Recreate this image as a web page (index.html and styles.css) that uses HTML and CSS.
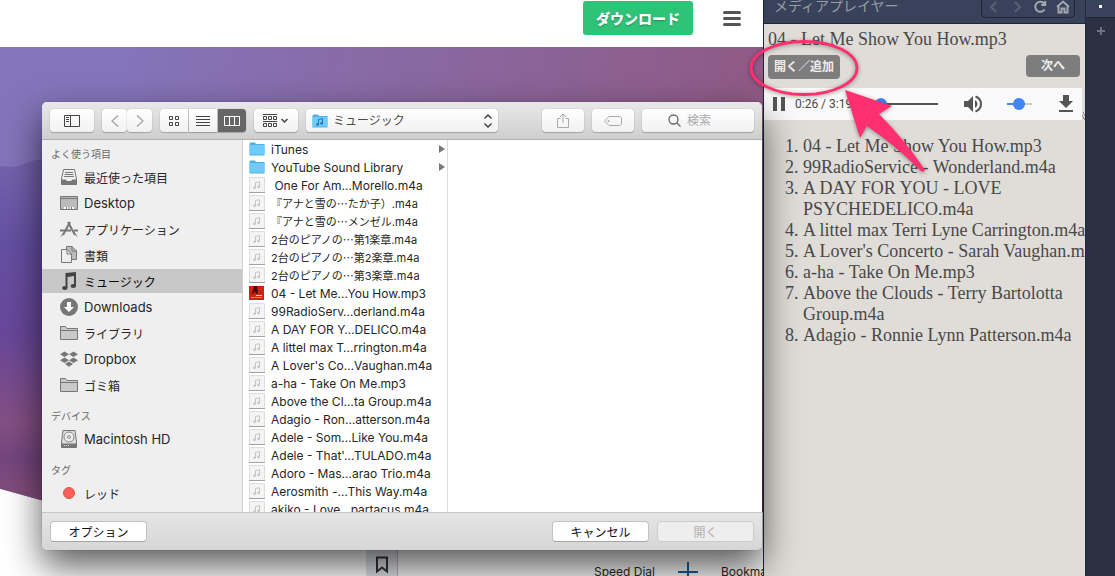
FILE: index.html
```html
<!DOCTYPE html>
<html lang="ja">
<head>
    <meta charset="UTF-8">
    <meta name="viewport" content="width=device-width, initial-scale=1.0">
    <title>メディアプレイヤー</title>
    <link rel="stylesheet" href="styles.css">
</head>
<body>
    <svg class="symbols" aria-hidden="true">
        <symbol id="folder" viewBox="0 0 16 14">
            <path d="M0.5 1.5 L1.5 0.5 H6 L7 2 H15.5 V13.5 H0.5 Z" fill="#4fb0e0"/>
            <path d="M0.5 3 H15.5 V12.5 H0.5 Z" fill="#6fcbf8"/>
        </symbol>
        <symbol id="song" viewBox="0 0 16 16">
            <path d="M0.5 0.5 H15.5 V15.5 H0.5 Z" fill="#f4f4f4" stroke="#dedede"/>
            <path d="M0 15.5 H16" stroke="#a2a2a2"/>
            <path d="M6.5 10.5 V5.5 L10.5 4.7 V9.7" fill="none" stroke="#c4c4c4"/>
            <circle cx="5.5" cy="10.7" r="1.3" fill="#c4c4c4"/>
            <circle cx="9.6" cy="9.9" r="1.3" fill="#c4c4c4"/>
        </symbol>
        <symbol id="gray-folder" viewBox="0 0 18 16">
            <path d="M0.5 14.5 V1.5 H5.5 L7 3.5 H17.5 V14.5 Z" fill="#c9c9c9" stroke="#777"/>
            <path d="M1 5.5 H17" stroke="#777"/>
        </symbol>
    </svg>

    <div class="desktop">
        <main class="page">
            <header class="page-header">
                <a href="#" class="download">ダウンロード</a>
                <button class="menu" aria-label="メニュー"><span></span><span></span><span></span></button>
            </header>
            <div class="hero">
                <svg class="mountain" viewBox="0 0 84 465" preserveAspectRatio="none" aria-hidden="true">
                    <defs>
                        <linearGradient id="rock" x1="0" y1="0" x2="0" y2="1">
                            <stop offset="0" stop-color="#7764ae"/>
                            <stop offset="0.25" stop-color="#654fa2"/>
                            <stop offset="0.5" stop-color="#68479a"/>
                            <stop offset="0.75" stop-color="#844f84"/>
                            <stop offset="0.85" stop-color="#74467f"/>
                            <stop offset="1" stop-color="#8b5079"/>
                        </linearGradient>
                    </defs>
                    <path d="M0 119 L14 120 L24 117 L32 114 L42 112 L84 108 V465 H0 Z" fill="url(#rock)"/>
                </svg>
            </div>
            <div class="speed-dial">
                <button class="bookmark" aria-label="ブックマーク">
                    <svg width="14" height="18" viewBox="0 0 14 18"><path d="M2 1.5 H12 V15.5 L7 11.5 L2 15.5 Z" fill="none" stroke="#333" stroke-width="2"/></svg>
                </button>
                <div class="dial-bar">
                    <span>Speed Dial</span>
                    <svg width="20" height="20" viewBox="0 0 20 20"><path d="M10 0 V20 M0 10 H20" stroke="#1c5a92" stroke-width="2"/></svg>
                    <span class="dial-bookmarks">Bookmarks</span>
                </div>
            </div>
        </main>

        <aside class="player">
            <header class="player-header">
                <h1>メディアプレイヤー</h1>
                <nav class="player-nav">
                    <button aria-label="戻る" disabled><svg width="14" height="14" viewBox="0 0 14 14"><path d="M9 2 L4 7 L9 12"/></svg></button>
                    <button aria-label="進む" disabled><svg width="14" height="14" viewBox="0 0 14 14"><path d="M5 2 L10 7 L5 12"/></svg></button>
                    <button aria-label="再読み込み"><svg width="14" height="14" viewBox="0 0 14 14"><path d="M11.5 9.5 A5 5 0 1 1 11 3.5 M12.2 1 V5 H8.2"/></svg></button>
                    <button aria-label="ホーム"><svg width="14" height="14" viewBox="0 0 14 14"><path d="M1 7 L7 1.5 L13 7 M2.5 6 V12.5 H5.5 V8.5 H8.5 V12.5 H11.5 V6"/></svg></button>
                </nav>
            </header>
            <div class="player-body">
                <p class="now-playing">04 - Let Me Show You How.mp3</p>
                <div class="player-buttons">
                    <button class="open">開く／追加</button>
                    <button class="next">次へ</button>
                </div>
                <div class="audio-row">
                    <div class="audio">
                        <button class="pause" aria-label="一時停止"><svg width="12" height="14" viewBox="0 0 12 14"><path d="M0 0 H4 V14 H0 Z M8 0 H12 V14 H8 Z" fill="#555"/></svg></button>
                        <span class="time">0:26 / 3:19</span>
                        <input type="range" class="seek" aria-label="再生位置" min="0" max="199" value="26">
                        <button aria-label="ミュート"><svg width="20" height="18" viewBox="0 0 20 18"><path d="M1 6 H5 L10 1 V17 L5 12 H1 Z" fill="#555"/><path d="M12 5 Q14.5 6.5 14.5 9 T12 13 Z" fill="#555"/><path d="M12.5 1.5 Q18 3.5 18 9 T12.5 16.5" fill="none" stroke="#555" stroke-width="2"/></svg></button>
                        <input type="range" class="volume" aria-label="音量" min="0" max="100" value="48">
                        <button aria-label="保存"><svg width="16" height="18" viewBox="0 0 16 18"><path d="M5 0 H11 V6 H15 L8 13 L1 6 H5 Z M1 15 H15 V17 H1 Z" fill="#555"/></svg></button>
                    </div>
                    <svg width="3" height="8" viewBox="0 0 3 8" aria-hidden="true"><path d="M1 1 H2 M2 3 H3 M0 4 H1 M1 6 H2 M2 7 H3" stroke="#444"/></svg>
                </div>
                <ol class="playlist">
                    <li>04 - Let Me Show You How.mp3</li>
                    <li>99RadioService - Wonderland.m4a</li>
                    <li>A DAY FOR YOU - LOVE<br>PSYCHEDELICO.m4a</li>
                    <li>A littel max Terri Lyne Carrington.m4a</li>
                    <li>A Lover's Concerto - Sarah Vaughan.m4a</li>
                    <li>a-ha - Take On Me.mp3</li>
                    <li>Above the Clouds - Terry Bartolotta<br>Group.m4a</li>
                    <li>Adagio - Ronnie Lynn Patterson.m4a</li>
                </ol>
            </div>
        </aside>

        <aside class="rail">
            <div class="rail-top"><span></span></div>
            <button aria-label="追加"><svg width="8" height="8" viewBox="0 0 8 8"><path d="M4 0 V8 M0 4 H8" stroke="#6c7280" stroke-width="2"/></svg></button>
        </aside>

        <section class="dialog" role="dialog" aria-label="開く">
            <div class="toolbar">
                <button class="tool wide" aria-label="サイドバー">
                    <svg width="16" height="12" viewBox="0 0 16 12"><path d="M0.5 0.5 H15.5 V11.5 H0.5 Z M6.5 0 V12 M2 2.5 H5 M2 4.5 H5 M2 6.5 H5" fill="none" stroke="#444"/></svg>
                </button>
                <div class="group arrows">
                    <button class="tool" aria-label="戻る"><svg width="8" height="12" viewBox="0 0 8 12"><path d="M7 0.5 L1 6 L7 11.5" fill="none" stroke="#aaa" stroke-width="1.5"/></svg></button>
                    <button class="tool" aria-label="進む"><svg width="8" height="12" viewBox="0 0 8 12"><path d="M1 0.5 L7 6 L1 11.5" fill="none" stroke="#aaa" stroke-width="1.5"/></svg></button>
                </div>
                <div class="group views">
                    <button class="tool" aria-label="アイコン"><svg width="12" height="12" viewBox="0 0 12 12"><path d="M1.5 1.5 H4.5 V4.5 H1.5 Z M7.5 1.5 H10.5 V4.5 H7.5 Z M1.5 7.5 H4.5 V10.5 H1.5 Z M7.5 7.5 H10.5 V10.5 H7.5 Z" fill="none" stroke="#444"/></svg></button>
                    <button class="tool" aria-label="リスト"><svg width="14" height="12" viewBox="0 0 14 12"><path d="M0 1.5 H14 M0 4.5 H14 M0 7.5 H14 M0 10.5 H14" stroke="#444"/></svg></button>
                    <button class="tool active" aria-label="カラム"><svg width="16" height="10" viewBox="0 0 16 10"><path d="M0.5 0.5 H15.5 V9.5 H0.5 Z M5.5 0 V10 M10.5 0 V10" fill="none" stroke="#fff"/></svg></button>
                </div>
                <button class="tool wide" aria-label="グループ">
                    <svg width="26" height="14" viewBox="0 0 26 14"><path d="M0 0.5 H14 M0 7.5 H14 M0.5 2.5 H3.5 V5.5 H0.5 Z M5.5 2.5 H8.5 V5.5 H5.5 Z M10.5 2.5 H13.5 V5.5 H10.5 Z M0.5 9.5 H3.5 V12.5 H0.5 Z M5.5 9.5 H8.5 V12.5 H5.5 Z M10.5 9.5 H13.5 V12.5 H10.5 Z" fill="none" stroke="#444"/><path d="M18.5 5 L21.5 8 L24.5 5" fill="none" stroke="#444" stroke-width="1.5"/></svg>
                </button>
                <div class="tool location">
                    <svg width="16" height="14" aria-hidden="true"><use href="#folder"/><path d="M6.5 10.5 V5.5 L10.5 4.5 V9.5" fill="none" stroke="#1977b5"/><circle cx="5.5" cy="10.5" r="1.3" fill="#1977b5"/><circle cx="9.5" cy="9.5" r="1.3" fill="#1977b5"/></svg>
                    <select aria-label="場所"><option>ミュージック</option></select>
                    <svg width="8" height="14" viewBox="0 0 8 14" aria-hidden="true"><path d="M0.5 4.5 L4 1 L7.5 4.5 M0.5 9.5 L4 13 L7.5 9.5" fill="none" stroke="#444" stroke-width="1.5"/></svg>
                </div>
                <button class="tool share" aria-label="共有">
                    <svg width="12" height="16" viewBox="0 0 12 16"><path d="M3.5 5.5 H0.5 V14.5 H11.5 V5.5 H8.5 M6 10 V1 M3 4 L6 1 L9 4" fill="none" stroke="#aaa"/></svg>
                </button>
                <button class="tool tag" aria-label="タグ">
                    <svg width="18" height="10" viewBox="0 0 18 10"><path d="M5 0.5 H15.5 L17.5 2 V8 L15.5 9.5 H5 L0.5 5 Z" fill="none" stroke="#aaa"/><circle cx="4.5" cy="5" r="1" fill="#aaa"/></svg>
                </button>
                <label class="tool search">
                    <svg width="13" height="13" viewBox="0 0 13 13" aria-hidden="true"><circle cx="5.5" cy="5.5" r="4.5" fill="none" stroke="#666" stroke-width="1.3"/><path d="M9 9 L12.5 12.5" stroke="#666" stroke-width="1.3"/></svg>
                    <input type="text" placeholder="検索" aria-label="検索">
                </label>
            </div>

            <div class="browser">
                <nav class="places">
                    <h2>よく使う項目</h2>
                    <ul>
                        <li class="ja"><svg width="18" height="18" viewBox="0 0 18 18"><path d="M3.5 1.5 H14.5 L16.5 11 V16.5 H1.5 V11 Z" fill="#eee" stroke="#777"/><path d="M5 4.5 H13 M4.5 6.5 H13.5 M4 8.5 H14" stroke="#777"/><path d="M1.5 11.5 H5.5 L7 13 H11 L12.5 11.5 H16.5 V16.5 H1.5 Z" fill="#777"/></svg>最近使った項目</li>
                        <li><svg width="18" height="18" viewBox="0 0 18 18"><path d="M0.5 2.5 H17.5 V15.5 H0.5 Z" fill="#bbb" stroke="#777"/><path d="M1 4.5 H17" stroke="#777"/><path d="M4 13 H14 V15 H4 Z" fill="#fff"/><path d="M6.5 13 V15 M9 13 V15 M11.5 13 V15" stroke="#777"/></svg>Desktop</li>
                        <li class="ja"><svg width="18" height="18" viewBox="0 0 18 18"><path d="M10 2 L3 15 M8 2 L15 15 M0 10.5 H11 M14 10.5 H18" fill="none" stroke="#777" stroke-width="2"/><path d="M1 16.5 L3 13.5 M17 16.5 L15 13.5" stroke="#777"/></svg>アプリケーション</li>
                        <li class="ja"><svg width="18" height="18" viewBox="0 0 18 18"><path d="M6.5 0.5 H12 L16.5 5 V13.5 H6.5 Z" fill="#bbb" stroke="#777"/><path d="M12 0.5 V5 H16.5" fill="none" stroke="#777"/><path d="M1.5 3.5 H7 L11.5 8 V16.5 H1.5 Z" fill="#eee" stroke="#777"/><path d="M7 3.5 V8 H11.5" fill="none" stroke="#777"/></svg>書類</li>
                        <li class="ja selected"><svg width="18" height="18" viewBox="0 0 18 18"><path d="M5.500 0.900 L16 0 V14 H14 V4 L7.500 5 V16 H5.500 Z" fill="#444"/><ellipse cx="4.800" cy="16" rx="2.700" ry="2" fill="#444"/><ellipse cx="13.300" cy="14" rx="2.700" ry="2" fill="#444"/></svg>ミュージック</li>
                        <li><svg width="18" height="18" viewBox="0 0 18 18"><circle cx="9" cy="9" r="9" fill="#777"/><path d="M7 4 H11 V9 H14 L9 14 L4 9 H7 Z" fill="#fff"/></svg>Downloads</li>
                        <li class="ja"><svg width="18" height="16"><use href="#gray-folder"/></svg>ライブラリ</li>
                        <li><svg width="18" height="18" viewBox="0 0 18 18"><path d="M4.500 1.500 L9 4.300 L4.500 7 L0 4.300 Z M13.500 1.500 L18 4.300 L13.500 7 L9 4.300 Z M4.500 7.500 L9 10.300 L4.500 13 L0 10.300 Z M13.500 7.500 L18 10.300 L13.500 13 L9 10.300 Z M9 11.500 L13 14 L9 16.800 L5 14 Z" fill="#777"/></svg>Dropbox</li>
                        <li class="ja"><svg width="18" height="16"><use href="#gray-folder"/></svg>ゴミ箱</li>
                    </ul>
                    <h2>デバイス</h2>
                    <ul>
                        <li><svg width="18" height="18" viewBox="0 0 18 18"><path d="M3 0.500 H15 L16.500 12 V17.500 H1.500 V12 Z" fill="#ddd" stroke="#777"/><circle cx="9" cy="7" r="5" fill="#eee" stroke="#888"/><circle cx="9" cy="7" r="1.500" fill="none" stroke="#888"/><path d="M1.500 13.500 H16.500 V17.500 H1.500 Z" fill="#777"/><path d="M4 15.500 H10" stroke="#ddd" stroke-dasharray="1 1"/></svg>Macintosh HD</li>
                    </ul>
                    <h2>タグ</h2>
                    <ul>
                        <li class="ja"><svg width="18" height="18" viewBox="0 0 18 18"><circle cx="9" cy="9" r="5.500" fill="#fc605b" stroke="#ee4d48"/></svg>レッド</li>
                    </ul>
                </nav>

                <ul class="files">
                    <li class="folder"><svg width="16" height="14"><use href="#folder"/></svg>iTunes</li>
                    <li class="folder"><svg width="16" height="14"><use href="#folder"/></svg>YouTube Sound Library</li>
                    <li><svg width="16" height="16"><use href="#song"/></svg>&nbsp;One For Am…Morello.m4a</li>
                    <li class="ja"><svg width="16" height="16"><use href="#song"/></svg>『アナと雪の<span class="dots">…</span>たか子）.m4a</li>
                    <li class="ja"><svg width="16" height="16"><use href="#song"/></svg>『アナと雪の<span class="dots">…</span>メンゼル.m4a</li>
                    <li class="ja"><svg width="16" height="16"><use href="#song"/></svg>2台のピアノの<span class="dots">…</span>第1楽章.m4a</li>
                    <li class="ja"><svg width="16" height="16"><use href="#song"/></svg>2台のピアノの<span class="dots">…</span>第2楽章.m4a</li>
                    <li class="ja"><svg width="16" height="16"><use href="#song"/></svg>2台のピアノの<span class="dots">…</span>第3楽章.m4a</li>
                    <li><svg width="16" height="16" viewBox="0 0 16 16"><path d="M0 1 H15 V15 H0 Z" fill="#d3200f"/><path d="M5 1 H8 L9 8 L7 9 L6 6 L4 9 H3 Z" fill="#3a1210"/><path d="M7 10.500 H13" stroke="#f6d9c8"/><path d="M2 12.500 H13" stroke="#e88a1a"/></svg>04 - Let Me…You How.mp3</li>
                    <li><svg width="16" height="16"><use href="#song"/></svg>99RadioServ…derland.m4a</li>
                    <li><svg width="16" height="16"><use href="#song"/></svg>A DAY FOR Y…DELICO.m4a</li>
                    <li><svg width="16" height="16"><use href="#song"/></svg>A littel max T…rrington.m4a</li>
                    <li><svg width="16" height="16"><use href="#song"/></svg>A Lover's Co…Vaughan.m4a</li>
                    <li><svg width="16" height="16"><use href="#song"/></svg>a-ha - Take On Me.mp3</li>
                    <li><svg width="16" height="16"><use href="#song"/></svg>Above the Cl…ta Group.m4a</li>
                    <li><svg width="16" height="16"><use href="#song"/></svg>Adagio - Ron…atterson.m4a</li>
                    <li><svg width="16" height="16"><use href="#song"/></svg>Adele - Som…Like You.m4a</li>
                    <li><svg width="16" height="16"><use href="#song"/></svg>Adele - That'…TULADO.m4a</li>
                    <li><svg width="16" height="16"><use href="#song"/></svg>Adoro - Mas…arao Trio.m4a</li>
                    <li><svg width="16" height="16"><use href="#song"/></svg>Aerosmith -…This Way.m4a</li>
                    <li><svg width="16" height="16"><use href="#song"/></svg>akiko - Love…partacus.m4a</li>
                </ul>
            </div>

            <footer class="dialog-footer">
                <button class="options">オプション</button>
                <button>キャンセル</button>
                <button disabled>開く</button>
            </footer>
        </section>

        <!-- 「開く／追加」を指す矢印 -->
        <svg class="callout" width="190" height="150" viewBox="0 0 190 150" aria-hidden="true">
            <ellipse cx="64" cy="38" rx="53" ry="26.5" fill="none" stroke="#ff2f70" stroke-width="3"/>
            <path d="M105 60 L152 76 L139 84 Q165 110 185 140 Q184 143 181 141 Q155 115 127 96 L120 108 Z" fill="#ff2f70"/>
        </svg>
    </div>
</body>
</html>
```
FILE: styles.css
```css
* {
    box-sizing: border-box;
}

body {
    margin: 0;
    font-family: Inter, "Noto Sans CJK JP", sans-serif;
    font-size: 13px;
    color: #262626;
}

button {
    margin: 0;
    padding: 0;
    border: none;
    background: none;
    font: inherit;
    color: inherit;
}

ul {
    list-style: none;
    margin: 0;
    padding: 0;
}

svg {
    display: block;
    flex: none;
}

.symbols {
    position: absolute;
    width: 0;
    height: 0;
}

.desktop {
    position: relative;
    display: flex;
    height: 100vh;
    overflow: hidden;
}

/* web page */
.page {
    flex: 1;
    min-width: 0;
    display: flex;
    flex-direction: column;
    background: #fff;
}

.page-header {
    display: flex;
    justify-content: flex-end;
    align-items: flex-start;
    gap: 30px;
    height: 47px;
    padding: 1px 22px 0 0;
}

.download {
    width: 110px;
    border-radius: 3px;
    background: #2ec478;
    color: #fff;
    font-family: "Noto Sans CJK JP", sans-serif;
    font-size: 14px;
    font-weight: 900;
    line-height: 34px;
    text-align: center;
    text-decoration: none;
    text-shadow: 0 1px 2px rgba(0, 0, 0, 0.3);
}

.menu {
    display: grid;
    gap: 3px;
    width: 18px;
    padding-top: 10px;
}

.menu span {
    height: 3px;
    border-radius: 2px;
    background: #555;
}

.hero {
    flex: 1;
    background: linear-gradient(165deg, transparent 70%, #7a2a48), linear-gradient(100deg, #8474ba 15%, #8f5a85 90%);
    clip-path: polygon(0 0, 100% 0, 100% 100%, 11% 100%, 0 95%);
}

.mountain {
    width: 84px;
    height: 100%;
}

.speed-dial {
    display: flex;
    height: 64px;
    margin-left: 366px;
    overflow: hidden;
}

.bookmark {
    display: flex;
    justify-content: center;
    width: 32px;
    padding-top: 44px;
    border-right: 1px solid #b6b8bc;
    background: #dfe1e8;
}

.dial-bar {
    flex: 1;
    display: flex;
    justify-content: flex-end;
    gap: 23px;
    padding-top: 50px;
    background: #f2f2f2;
    font-size: 12px;
    line-height: 20px;
    white-space: nowrap;
}

.dial-bookmarks {
    width: 42px;
}

/* media player panel */
.player {
    display: flex;
    flex-direction: column;
    width: 322px;
    border-left: 1px solid #1d2433;
    background: #e0ddd8;
    font-family: "Liberation Serif", "Noto Sans CJK JP", serif;
    font-size: 18px;
    line-height: 21px;
    color: #484848;
}

.player-header {
    display: flex;
    justify-content: space-between;
    height: 24px;
    padding: 0 10px;
    border-bottom: 1px solid #1f2738;
    background: #38425a;
    font-family: "Noto Sans CJK JP", sans-serif;
}

.player-header h1 {
    margin: 0;
    font-size: 14px;
    font-weight: normal;
    line-height: 10px;
    color: #979ca8;
}

.player-nav {
    display: flex;
    height: 18px;
    border: 1px solid #1f2738;
    border-top: none;
    border-radius: 0 0 5px 5px;
}

.player-nav button {
    display: flex;
    justify-content: center;
    width: 23px;
}

.player-nav path {
    fill: none;
    stroke: #a3a7b0;
    stroke-width: 2;
}

.player-nav button:disabled path {
    stroke: #596178;
}

.player-body {
    flex: 1;
    overflow: hidden;
    white-space: nowrap;
}

.now-playing {
    margin: 5px 0 5px 4px;
}

.player-buttons {
    display: flex;
    justify-content: space-between;
    align-items: flex-start;
    padding: 0 5px 9px 4px;
}

.player-buttons button {
    border-radius: 4px;
    background: #7d7d7d;
    color: #eee;
    font-family: "Noto Sans CJK JP", sans-serif;
    font-size: 12px;
    font-weight: bold;
    line-height: 20px;
}

.player-buttons .open {
    width: 72px;
    height: 24px;
    padding-bottom: 2px;
}

.player-buttons .next {
    width: 54px;
    height: 22px;
    padding-bottom: 2px;
}

.audio-row {
    display: flex;
    align-items: flex-end;
}

.audio {
    flex: 1;
    min-width: 0;
    display: flex;
    align-items: center;
    height: 32px;
    padding: 0 8px 0 9px;
    background: #fafafa;
}

.time {
    width: 72px;
    margin-left: 10px;
    font-family: Roboto, sans-serif;
    font-size: 12px;
}

.seek,
.volume {
    appearance: none;
    height: 12px;
    margin: 0;
    background: linear-gradient(#555, #555) center / 100% 2px no-repeat;
}

.seek {
    flex: 1;
    min-width: 0;
    margin-right: 25px;
}

.volume {
    width: 25px;
    margin: 0 26px 0 24px;
    background-image: linear-gradient(90deg, #4285f4 50%, #ccc 50%);
}

.seek::-webkit-slider-thumb,
.volume::-webkit-slider-thumb {
    appearance: none;
    width: 12px;
    height: 12px;
    border-radius: 50%;
    background: #4285f4;
}

.playlist {
    margin: 16px 0;
    padding-left: 39px;
}

/* dark rail */
.rail {
    width: 30px;
    border-left: 1px solid #222a3a;
    background: #2b3142;
}

.rail-top {
    display: flex;
    justify-content: center;
    height: 18px;
    padding-top: 5px;
    border-bottom: 1px solid #1f2738;
    background: #38425a;
}

.rail-top span {
    width: 3px;
    height: 3px;
    background: #fff;
}

.rail button {
    display: flex;
    justify-content: center;
    width: 100%;
    padding-top: 9px;
}

/* file dialog */
.dialog {
    position: absolute;
    top: 102px;
    left: 42px;
    right: 353px;
    overflow: hidden;
    border-radius: 5px;
    background: #fff;
    box-shadow: 0 0 1px rgba(0, 0, 0, 0.5), 0 16px 36px rgba(0, 0, 0, 0.65);
}

.toolbar {
    display: flex;
    align-items: center;
    gap: 8px;
    height: 38px;
    padding: 0 8px;
    border-bottom: 1px solid #b1b1b1;
    background: linear-gradient(#e8e8e8, #cfcfcf);
}

.tool {
    display: flex;
    justify-content: center;
    align-items: center;
    height: 23px;
    border-radius: 4px;
    background: linear-gradient(#fff, #f1f1f1);
    box-shadow: 0 0 1px rgba(0, 0, 0, 0.35), 0 1px 1px rgba(0, 0, 0, 0.2);
}

.wide {
    width: 44px;
}

.group {
    display: flex;
}

.arrows .tool {
    width: 25px;
}

.views {
    gap: 1px;
}

.views .tool {
    width: 28px;
    border-radius: 0;
}

.views .tool:first-child {
    border-radius: 4px 0 0 4px;
}

.views .tool.active {
    border-radius: 0 4px 4px 0;
    background: #666;
}

.location {
    gap: 5px;
    width: 192px;
    padding: 0 6px;
}

.location select {
    flex: 1;
    appearance: none;
    padding: 0;
    border: none;
    background: none;
    font: inherit;
    font-size: 12px;
    color: #4a4a4a;
}

.share,
.tag {
    width: 42px;
}

.share {
    margin-left: auto;
}

.search {
    gap: 6px;
    width: 112px;
    padding-left: 26px;
}

.search input {
    flex: 1;
    min-width: 0;
    padding: 0;
    border: none;
    background: none;
    font: inherit;
    font-size: 12px;
}

.search input::placeholder {
    color: #aaa;
}

.browser {
    display: flex;
    height: 372px;
    overflow: hidden;
}

.places {
    width: 201px;
    padding-top: 4px;
    border-right: 1px solid #d2d2d2;
    background: #efefef;
}

.places h2 {
    margin: 0 0 0 9px;
    font-size: 10px;
    font-weight: normal;
    line-height: 20px;
    color: #6a6a6a;
}

.places ul + h2 {
    margin-top: 8px;
}

.places li {
    display: flex;
    align-items: center;
    gap: 6px;
    height: 24px;
    margin: 1px 0;
    padding-left: 18px;
}

.places ul {
    display: flow-root;
}

.places li + li {
    margin-top: 2px;
}

.places .ja {
    font-size: 12px;
}

.places .selected {
    background: #c8c8c8;
    color: #000;
}

.files {
    width: 205px;
    border-right: 1px solid #dcdcdc;
    font-size: 12px;
}

.files li {
    display: flex;
    align-items: center;
    height: 18px;
    padding: 0 2px 0 6px;
    white-space: nowrap;
}

.files .ja {
    font-size: 11px;
}

.files svg {
    margin-right: 6px;
}

.files .folder::after {
    content: "";
    margin-left: auto;
    border: 4px solid transparent;
    border-left: 6px solid #777;
    border-right: none;
}

.dots {
    font-family: "Noto Sans CJK JP", sans-serif;
}

.dialog-footer {
    display: flex;
    align-items: center;
    gap: 8px;
    height: 38px;
    padding: 0 8px;
    border-top: 1px solid #c6c6c6;
    background: linear-gradient(#e5e5e5, #d6d6d6);
}

.dialog-footer button {
    width: 97px;
    height: 21px;
    border: 1px solid #c2c2c2;
    border-bottom-color: #a5a5a5;
    border-radius: 4px;
    background: #fff;
    font-size: 12px;
    color: #111;
}

.dialog-footer button:disabled {
    border-color: #ccc;
    background: #eee;
    color: #b0b0b0;
}

.dialog-footer .options {
    margin-right: auto;
}

.callout {
    position: absolute;
    top: 30px;
    right: 185px;
    filter: drop-shadow(0 1px 2px rgba(0, 0, 0, 0.4));
}
```
